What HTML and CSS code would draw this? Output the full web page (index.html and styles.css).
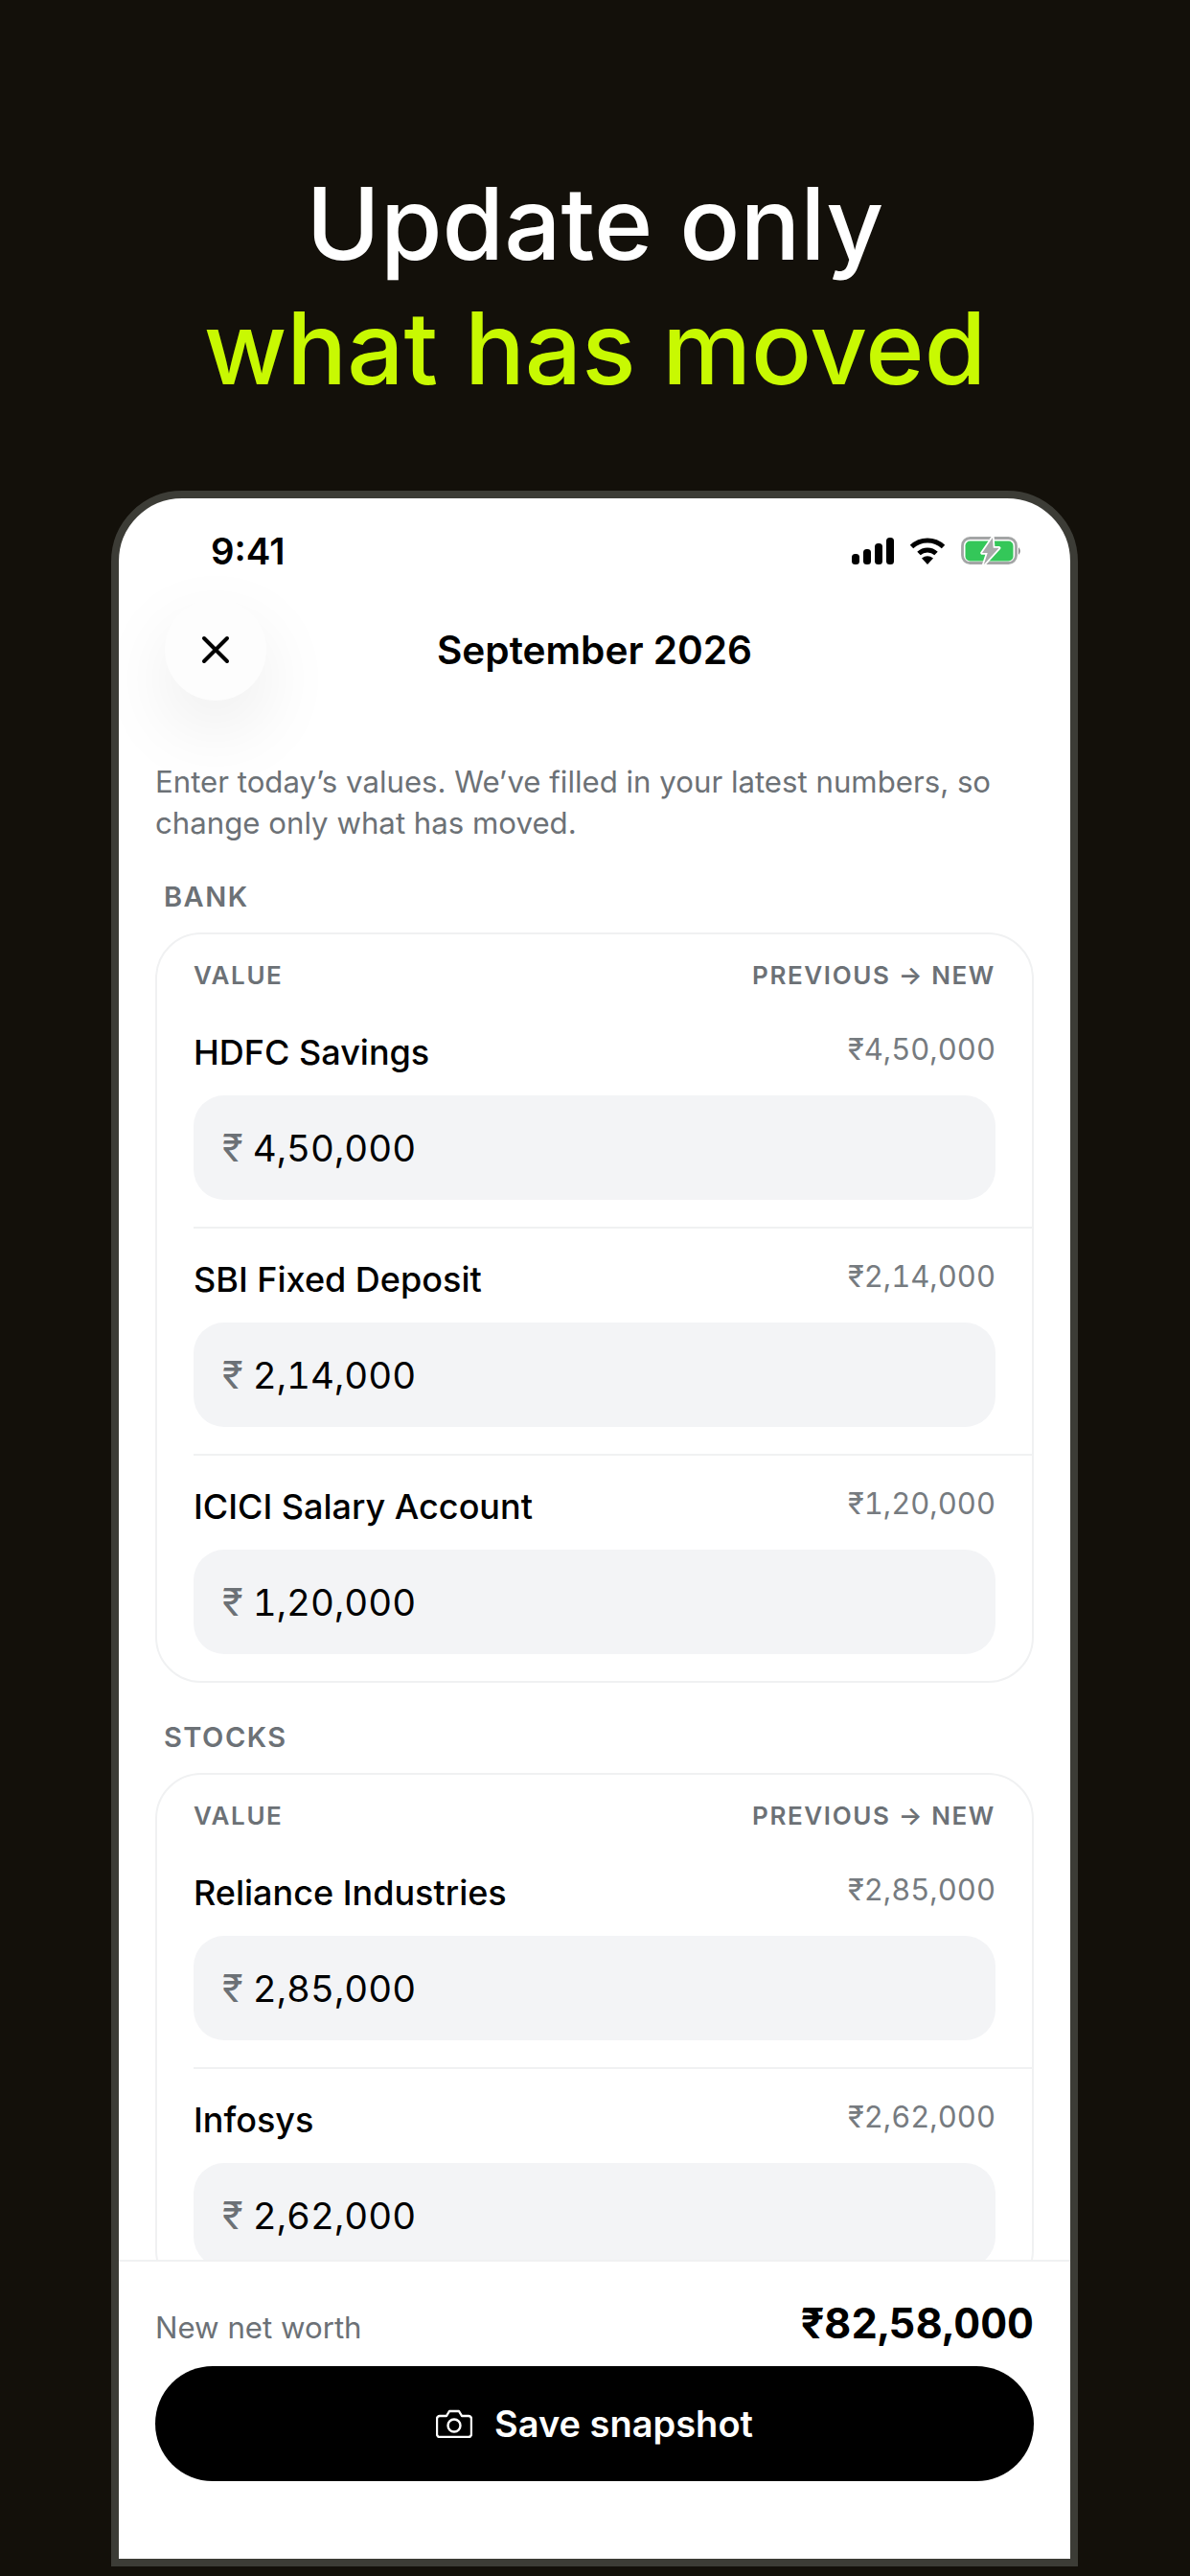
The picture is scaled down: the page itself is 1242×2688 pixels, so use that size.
FILE: index.html
```html
<!DOCTYPE html>
<html lang="en">
<head>
    <meta charset="UTF-8">
    <meta name="viewport" content="width=device-width, initial-scale=1.0">
    <title>Update only what has moved</title>
    <link rel="stylesheet" href="styles.css">
</head>
<body>
    <header class="hero">
        <h1>Update only<br><span class="accent">what has moved</span></h1>
    </header>

    <main class="phone">
        <div class="status-bar">
            <span class="time">9:41</span>
            <div class="status-icons">
                <svg class="icon-signal" viewBox="0 0 44 28">
                    <rect x="0" y="17" width="8" height="11" rx="3.5"/>
                    <rect x="12" y="12" width="8" height="16" rx="3.5"/>
                    <rect x="24" y="6" width="8" height="22" rx="3.5"/>
                    <rect x="36" y="0" width="8" height="28" rx="3.5"/>
                </svg>
                <svg class="icon-wifi" viewBox="0 0 38 28">
                    <path d="M2.5 9.5A24 24 0 0 1 35.5 9.5" fill="none" stroke="#000" stroke-width="5"/>
                    <path d="M10 16.5A13 13 0 0 1 28 16.5" fill="none" stroke="#000" stroke-width="5"/>
                    <path d="M19 28L13 21.5Q19 17 25 21.5Z"/>
                </svg>
                <svg class="icon-battery" viewBox="0 0 64 30">
                    <rect x="1.5" y="1.5" width="56" height="26" rx="8" fill="none" stroke="#a3a5a5" stroke-width="2.8"/>
                    <rect x="4.5" y="4.5" width="50" height="21" rx="5" fill="#34c759"/>
                    <path d="M60 11Q63.5 15 60 19Z" fill="#7e7e7e"/>
                    <path d="M33 1L22 17H27.7L23.7 29.3L39.7 11.7H33.7Z" fill="#a8aaaa" stroke="#fff" stroke-width="3.5" stroke-linejoin="round" paint-order="stroke"/>
                </svg>
            </div>
        </div>

        <div class="top-bar">
            <button class="close-btn" type="button" aria-label="Close">
                <svg viewBox="0 0 30 30" class="icon-close">
                    <path d="M3 3L27 27M27 3L3 27" fill="none" stroke="#000" stroke-width="4" stroke-linecap="round"/>
                </svg>
            </button>
            <h2>September 2026</h2>
        </div>

        <div class="content">
            <p class="intro">Enter today’s values. We’ve filled in your latest numbers, so change only what has moved.</p>

            <h3 class="section-label">BANK</h3>
            <section class="card">
                <div class="card-head"><span>VALUE</span><span>PREVIOUS → NEW</span></div>
                <div class="row">
                    <div class="row-top"><span class="name">HDFC Savings</span><span class="prev">₹4,50,000</span></div>
                    <div class="field"><span class="rupee">₹</span><span class="amount">4,50,000</span></div>
                </div>
                <div class="row">
                    <div class="row-top"><span class="name">SBI Fixed Deposit</span><span class="prev">₹2,14,000</span></div>
                    <div class="field"><span class="rupee">₹</span><span class="amount">2,14,000</span></div>
                </div>
                <div class="row">
                    <div class="row-top"><span class="name">ICICI Salary Account</span><span class="prev">₹1,20,000</span></div>
                    <div class="field"><span class="rupee">₹</span><span class="amount">1,20,000</span></div>
                </div>
            </section>

            <h3 class="section-label">STOCKS</h3>
            <section class="card">
                <div class="card-head"><span>VALUE</span><span>PREVIOUS → NEW</span></div>
                <div class="row">
                    <div class="row-top"><span class="name">Reliance Industries</span><span class="prev">₹2,85,000</span></div>
                    <div class="field"><span class="rupee">₹</span><span class="amount">2,85,000</span></div>
                </div>
                <div class="row">
                    <div class="row-top"><span class="name">Infosys</span><span class="prev">₹2,62,000</span></div>
                    <div class="field"><span class="rupee">₹</span><span class="amount">2,62,000</span></div>
                </div>
            </section>
        </div>

        <footer class="footer">
            <div class="total">
                <span class="total-label">New net worth</span>
                <span class="total-value">₹82,58,000</span>
            </div>
            <button class="save-btn" type="button">
                <svg class="icon-camera" viewBox="0 0 38 30">
                    <path d="M4 7H11L14 2H24L27 7H34A3 3 0 0 1 37 10V26A3 3 0 0 1 34 29H4A3 3 0 0 1 1 26V10A3 3 0 0 1 4 7Z" fill="none" stroke="#fff" stroke-width="2.4" stroke-linejoin="round"/>
                    <circle cx="19" cy="17" r="6.5" fill="none" stroke="#fff" stroke-width="2.4"/>
                </svg>
                Save snapshot
            </button>
        </footer>
    </main>
</body>
</html>
```
FILE: styles.css
```css
* {
    box-sizing: border-box;
}
html, body {
    margin: 0;
    height: 2688px;
    overflow: hidden;
}
body {
    background-color: #13100a;
    font-family: 'Inter', 'Liberation Sans', sans-serif;
    color: #000;
}
h1, h2, h3, p {
    margin: 0;
}

/* headline above the phone */
.hero {
    height: 512px;
    padding-top: 168px;
}
.hero h1 {
    font-size: 104.5px;
    line-height: 130px;
    font-weight: 500;
    text-align: center;
    color: #fff;
}
.accent {
    color: #c8f902;
}

/* phone frame */
.phone {
    display: flex;
    flex-direction: column;
    width: 1009px;
    height: 2166px;
    margin-left: 116px;
    background: #fff;
    border: 8px solid #3c3c36;
    border-radius: 74px 74px 0 0;
    overflow: hidden;
}
.status-bar {
    display: flex;
    justify-content: space-between;
    align-items: center;
    height: 105px;
    padding: 4px 50px 0 96px;
    flex-shrink: 0;
}
.time {
    font-size: 38.4px;
    font-weight: 600;
}
.status-icons {
    display: flex;
    align-items: center;
    gap: 16px;
}
.icon-signal {
    width: 44px;
    height: 28px;
}
.icon-wifi {
    width: 38px;
    height: 28px;
}
.icon-battery {
    width: 64px;
    height: 30px;
}

.top-bar {
    display: grid;
    grid-template-columns: 106px 1fr 106px;
    align-items: center;
    height: 106px;
    padding-left: 48px;
    padding-right: 48px;
    flex-shrink: 0;
}
.top-bar h2 {
    font-size: 40.6px;
    font-weight: 600;
    text-align: center;
}
.close-btn {
    display: flex;
    align-items: center;
    justify-content: center;
    width: 106px;
    height: 106px;
    padding: 0;
    border: none;
    border-radius: 50%;
    background: #fdfdfd;
    box-shadow: 0 30px 80px rgba(0, 0, 0, 0.08);
}
.icon-close {
    width: 30px;
    height: 30px;
}

.content {
    flex: 1;
    min-height: 0;
    overflow: hidden;
    padding: 64px 38px 0;
}
.intro {
    font-size: 31.2px;
    line-height: 43px;
    color: #6c7176;
}
.section-label {
    margin: 38px 0 20px 9px;
    font-size: 29px;
    line-height: 34px;
    font-weight: 600;
    letter-spacing: 1.5px;
    color: #6c7176;
}
.card + .section-label {
    margin-top: 40px;
}
.card {
    background: #fff;
    border: 2px solid #f0f1f2;
    border-radius: 48px;
}
.card-head {
    display: flex;
    justify-content: space-between;
    padding: 27px 38px 11px;
    font-size: 26px;
    line-height: 32px;
    font-weight: 600;
    letter-spacing: 1.6px;
    color: #6c7176;
}
.row {
    margin-left: 38px;
    padding: 33px 38px 28px 0;
    border-bottom: 2px solid #f0f1f2;
}
.row:last-child {
    border-bottom: none;
}
.row-top {
    display: flex;
    justify-content: space-between;
    align-items: flex-start;
    margin-bottom: 25px;
}
.name {
    font-size: 36px;
    line-height: 40px;
    font-weight: 500;
}
.prev {
    margin-top: 1px;
    font-size: 31px;
    line-height: 32px;
    color: #767b80;
    font-variant-numeric: tabular-nums;
}
.field {
    display: flex;
    align-items: center;
    gap: 10px;
    height: 109px;
    padding-left: 30px;
    background: #f3f4f6;
    border-radius: 32px;
}
.rupee {
    font-size: 40px;
    color: #6c7176;
}
.amount {
    font-size: 38.5px;
    font-variant-numeric: tabular-nums;
}

.footer {
    flex-shrink: 0;
    height: 312px;
    padding: 36px 38px 0;
    background: #fff;
    border-top: 2px solid #f0f1f2;
}
.total {
    display: flex;
    justify-content: space-between;
    align-items: baseline;
    margin-bottom: 17px;
}
.total-label {
    font-size: 31.2px;
    color: #6c7176;
}
.total-value {
    font-size: 43.2px;
    line-height: 56px;
    font-weight: 700;
    font-variant-numeric: tabular-nums;
}
.save-btn {
    display: flex;
    align-items: center;
    justify-content: center;
    gap: 23px;
    width: 100%;
    height: 120px;
    border: none;
    border-radius: 60px;
    background: #000;
    color: #fff;
    font-family: inherit;
    font-size: 38px;
    font-weight: 600;
}
.icon-camera {
    width: 38px;
    height: 30px;
}
```
